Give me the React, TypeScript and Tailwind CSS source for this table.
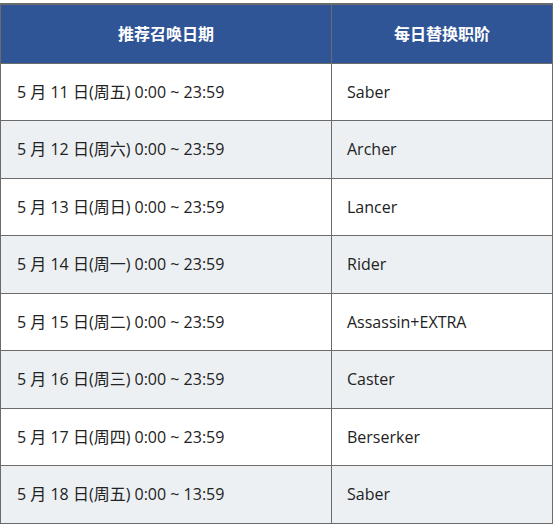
const rows = [
  { date: "5 月 11 日(周五) 0:00 ~ 23:59", cls: "Saber" },
  { date: "5 月 12 日(周六) 0:00 ~ 23:59", cls: "Archer" },
  { date: "5 月 13 日(周日) 0:00 ~ 23:59", cls: "Lancer" },
  { date: "5 月 14 日(周一) 0:00 ~ 23:59", cls: "Rider" },
  { date: "5 月 15 日(周二) 0:00 ~ 23:59", cls: "Assassin+EXTRA" },
  { date: "5 月 16 日(周三) 0:00 ~ 23:59", cls: "Caster" },
  { date: "5 月 17 日(周四) 0:00 ~ 23:59", cls: "Berserker" },
  { date: "5 月 18 日(周五) 0:00 ~ 13:59", cls: "Saber" },
];

export default function App() {
  return (
    <div
      className="bg-white pt-[3px] w-[555px] h-[525px]"
      style={{ fontFamily: '"Open Sans", "Noto Sans CJK SC", sans-serif' }}
    >
      <table className="w-[553px] border-collapse text-[16px] text-[#222]">
        <thead>
          <tr className="h-[59px]">
            <th className="w-[331px] bg-[#2f5597] text-white font-bold border border-[#6b6b6b] border-t-2">
              推荐召唤日期
            </th>
            <th className="bg-[#2f5597] text-white font-bold border border-[#6b6b6b] border-t-2">
              每日替换职阶
            </th>
          </tr>
        </thead>
        <tbody>
          {rows.map((r, i) => (
            <tr key={i} className={i % 2 === 1 ? "h-[57.5px] bg-[#ecf0f3]" : "h-[57.5px] bg-white"}>
              <td className="pl-4 text-left border border-[#6b6b6b]">{r.date}</td>
              <td className="pl-[15px] text-left border border-[#6b6b6b]">{r.cls}</td>
            </tr>
          ))}
        </tbody>
      </table>
    </div>
  );
}
